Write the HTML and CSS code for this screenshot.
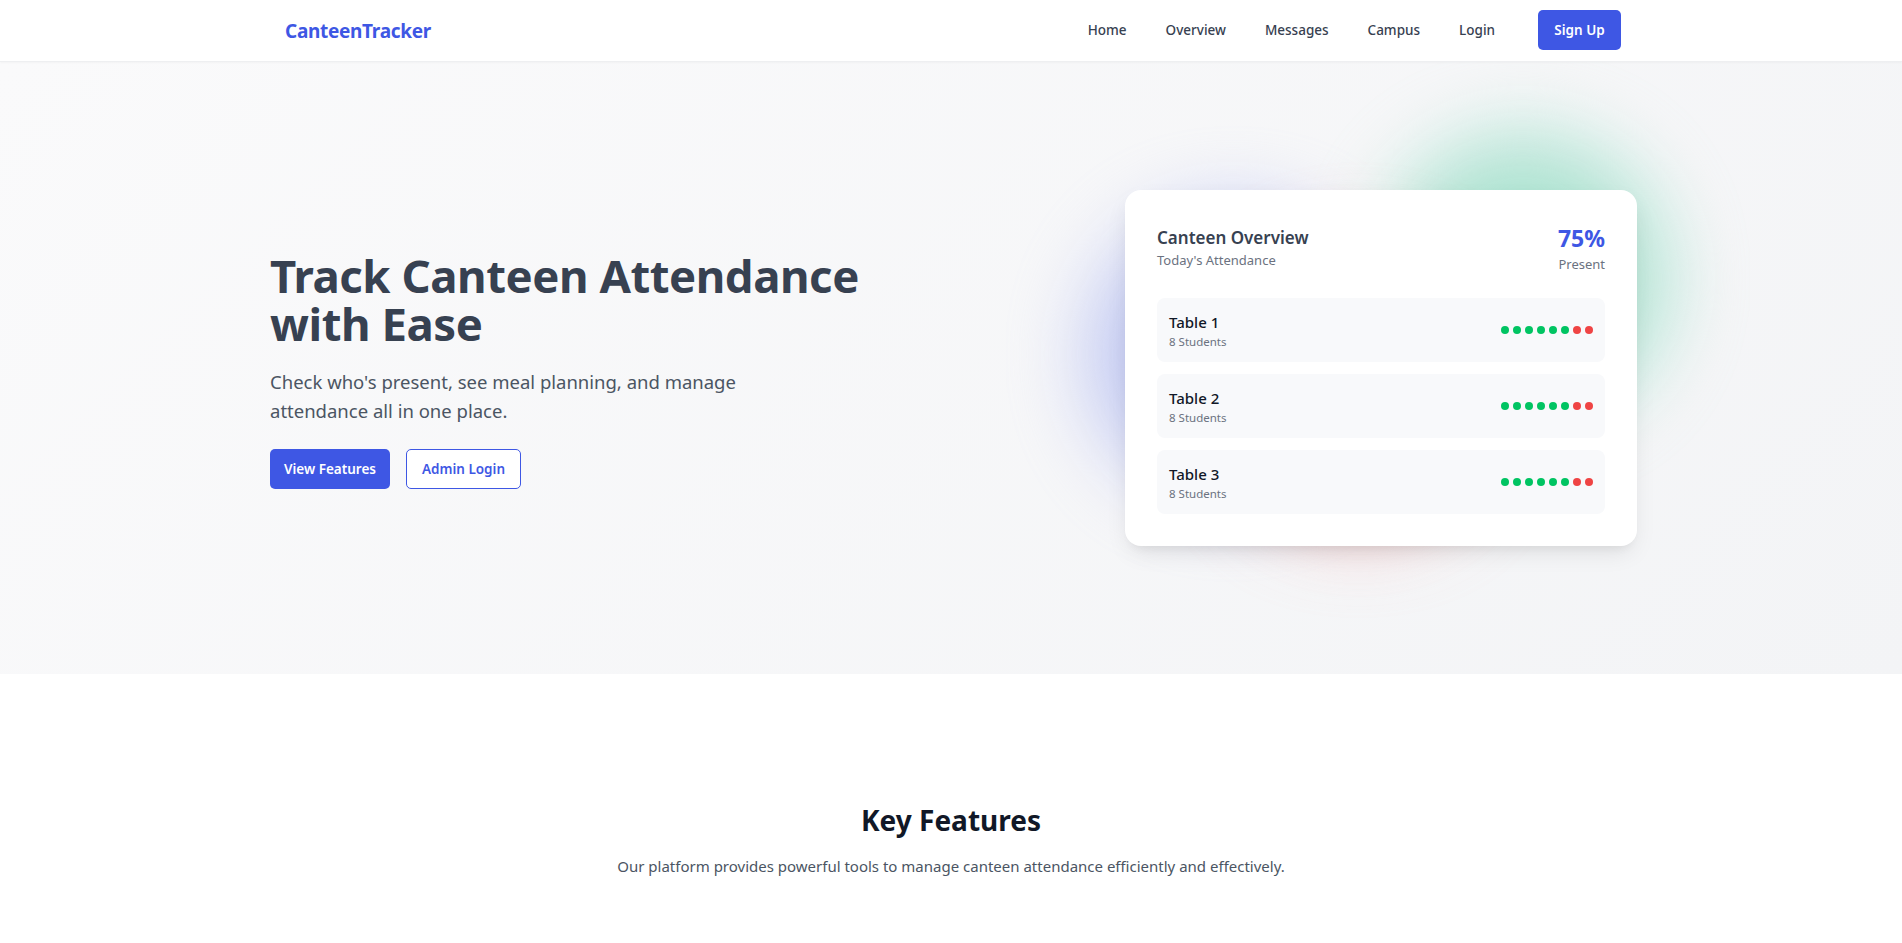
FILE: index.html
```html
<!DOCTYPE html>
<html lang="en">
<head>
<meta charset="utf-8">
<title>CanteenTracker</title>
<link rel="stylesheet" href="styles.css">
</head>
<body>
<header class="nav">
  <div class="nav-inner">
    <a class="logo" href="#">CanteenTracker</a>
    <nav class="links">
      <a href="#">Home</a>
      <a href="#">Overview</a>
      <a href="#">Messages</a>
      <a href="#">Campus</a>
      <a href="#">Login</a>
      <a href="#" class="btn-signup">Sign Up</a>
    </nav>
  </div>
</header>

<section class="hero">
  <div class="hero-inner">
    <div class="hero-text">
      <h1>Track Canteen Attendance with Ease</h1>
      <p>Check who's present, see meal planning, and manage attendance all in one place.</p>
      <div class="actions">
        <a href="#" class="btn btn-primary">View Features</a>
        <a href="#" class="btn btn-outline">Admin Login</a>
      </div>
    </div>
    <div class="card-wrap">
      <div class="blob blob-green"></div>
      <div class="blob blob-blue"></div>
      <div class="blob blob-red"></div>
      <div class="card">
        <div class="card-head">
          <div>
            <div class="card-title">Canteen Overview</div>
            <div class="card-sub">Today's Attendance</div>
          </div>
          <div class="pct">
            <div class="pct-num">75%</div>
            <div class="card-sub">Present</div>
          </div>
        </div>
        <div class="rows">
          <div class="row">
            <div><div class="row-title">Table 1</div><div class="row-sub">8 Students</div></div>
            <div class="dots"><i class="g"></i><i class="g"></i><i class="g"></i><i class="g"></i><i class="g"></i><i class="g"></i><i class="r"></i><i class="r"></i></div>
          </div>
          <div class="row">
            <div><div class="row-title">Table 2</div><div class="row-sub">8 Students</div></div>
            <div class="dots"><i class="g"></i><i class="g"></i><i class="g"></i><i class="g"></i><i class="g"></i><i class="g"></i><i class="r"></i><i class="r"></i></div>
          </div>
          <div class="row">
            <div><div class="row-title">Table 3</div><div class="row-sub">8 Students</div></div>
            <div class="dots"><i class="g"></i><i class="g"></i><i class="g"></i><i class="g"></i><i class="g"></i><i class="g"></i><i class="r"></i><i class="r"></i></div>
          </div>
        </div>
      </div>
    </div>
  </div>
</section>

<section class="features">
  <h2>Key Features</h2>
  <p>Our platform provides powerful tools to manage canteen attendance efficiently and effectively.</p>
</section>
</body>
</html>
```

FILE: styles.css
```css
* { box-sizing: border-box; }
html, body { margin: 0; padding: 0; }
body {
  font-family: "Noto Sans", "Open Sans", sans-serif;
  color: #374151;
  background: #fff;
}
a { text-decoration: none; }

.nav {
  height: 62px;
  background: #fff;
  border-bottom: 1px solid #eeeff1;
  box-shadow: 0 1px 2px rgba(0,0,0,0.03);
  position: relative;
  z-index: 5;
}
.nav-inner {
  max-width: 1400px;
  margin: 0 auto;
  padding: 0 30px 0 34px;
  height: 100%;
  display: flex;
  align-items: center;
  justify-content: space-between;
}
.logo {
  font-size: 19px;
  font-weight: 700;
  color: #3e57e4;
  letter-spacing: -0.3px;
}
.links {
  display: flex;
  align-items: center;
  gap: 39px;
}
.links a {
  font-size: 13.5px;
  line-height: 20px;
  font-weight: 500;
  color: #374151;
  margin-top: -1px;
}
.links a.btn-signup {
  background: #3e57e4;
  color: #fff;
  font-weight: 600;
  height: 40px;
  width: 83px;
  display: flex;
  align-items: center;
  justify-content: center;
  border-radius: 5px;
  margin-left: 4px;
}

.hero {
  background: linear-gradient(135deg, #fafafb 0%, #f3f4f6 100%);
  overflow: hidden;
}
.hero-inner {
  max-width: 1400px;
  margin: 0 auto;
  padding: 128px 14px 128px 19px;
  display: flex;
  align-items: center;
  justify-content: space-between;
}
.hero-text h1 {
  margin: 4px 0 20px;
  font-size: 45.5px;
  line-height: 48px;
  font-weight: 700;
  color: #374151;
  letter-spacing: -0.45px;
  max-width: 640px;
}
.hero-text p {
  margin: 0 0 24px;
  font-size: 18.5px;
  line-height: 29px;
  color: #4b5563;
  max-width: 512px;
}
.actions { display: flex; gap: 16px; }
.btn {
  height: 40px;
  display: inline-flex;
  align-items: center;
  justify-content: center;
  font-size: 13.5px;
  font-weight: 600;
  border-radius: 5px;
}
.btn-primary { background: #3e57e4; color: #fff; width: 120px; }
.btn-outline { border: 1px solid #3e57e4; color: #3e57e4; background: #fff; width: 115px; }

.card-wrap { position: relative; width: 512px; }
.blob {
  position: absolute;
  width: 288px;
  height: 288px;
  border-radius: 50%;
  filter: blur(40px);
}
.blob-green { background: #a9e2cf; opacity: 0.95; right: -30px; top: -56px; }
.blob-blue { background: #bcc3f2; opacity: 0.95; left: -36px; top: 20px; }
.blob-red { background: #f3b4b4; opacity: 0.8; left: 90px; bottom: 12px; }

.card {
  position: relative;
  background: #fff;
  border-radius: 16px;
  padding: 32px;
  box-shadow: 0 10px 25px -5px rgba(0,0,0,0.1), 0 8px 10px -6px rgba(0,0,0,0.06);
}
.card-head {
  display: flex;
  justify-content: space-between;
  margin-bottom: 24px;
}
.card-title { font-size: 17px; line-height: 28px; font-weight: 600; color: #374151; margin-top: 2px; }
.card-sub { font-size: 13px; line-height: 20px; color: #6b7280; }
.card-head > div:first-child .card-sub { margin-top: -2px; }
.pct { text-align: right; }
.pct-num { font-size: 23px; line-height: 32px; font-weight: 700; color: #3e57e4; }

.rows { display: flex; flex-direction: column; gap: 12px; }
.row {
  height: 64px;
  background: #f8f9fb;
  border-radius: 8px;
  padding: 0 12px;
  display: flex;
  align-items: center;
  justify-content: space-between;
}
.row-title { font-size: 15px; line-height: 24px; font-weight: 500; color: #111827; }
.row-sub { font-size: 11.5px; line-height: 16px; color: #6b7280; }
.dots { display: flex; gap: 4px; margin-right: 0; }
.dots i { width: 8px; height: 8px; border-radius: 50%; display: block; }
.dots i.g { background: #00c462; }
.dots i.r { background: #ef4444; }

.features {
  padding: 128px 16px 60px;
  text-align: center;
}
.features h2 {
  margin: 0 0 14px;
  font-size: 28px;
  line-height: 36px;
  font-weight: 700;
  color: #111827;
}
.features p {
  margin: 0;
  font-size: 15px;
  line-height: 28px;
  color: #4b5563;
}
```
